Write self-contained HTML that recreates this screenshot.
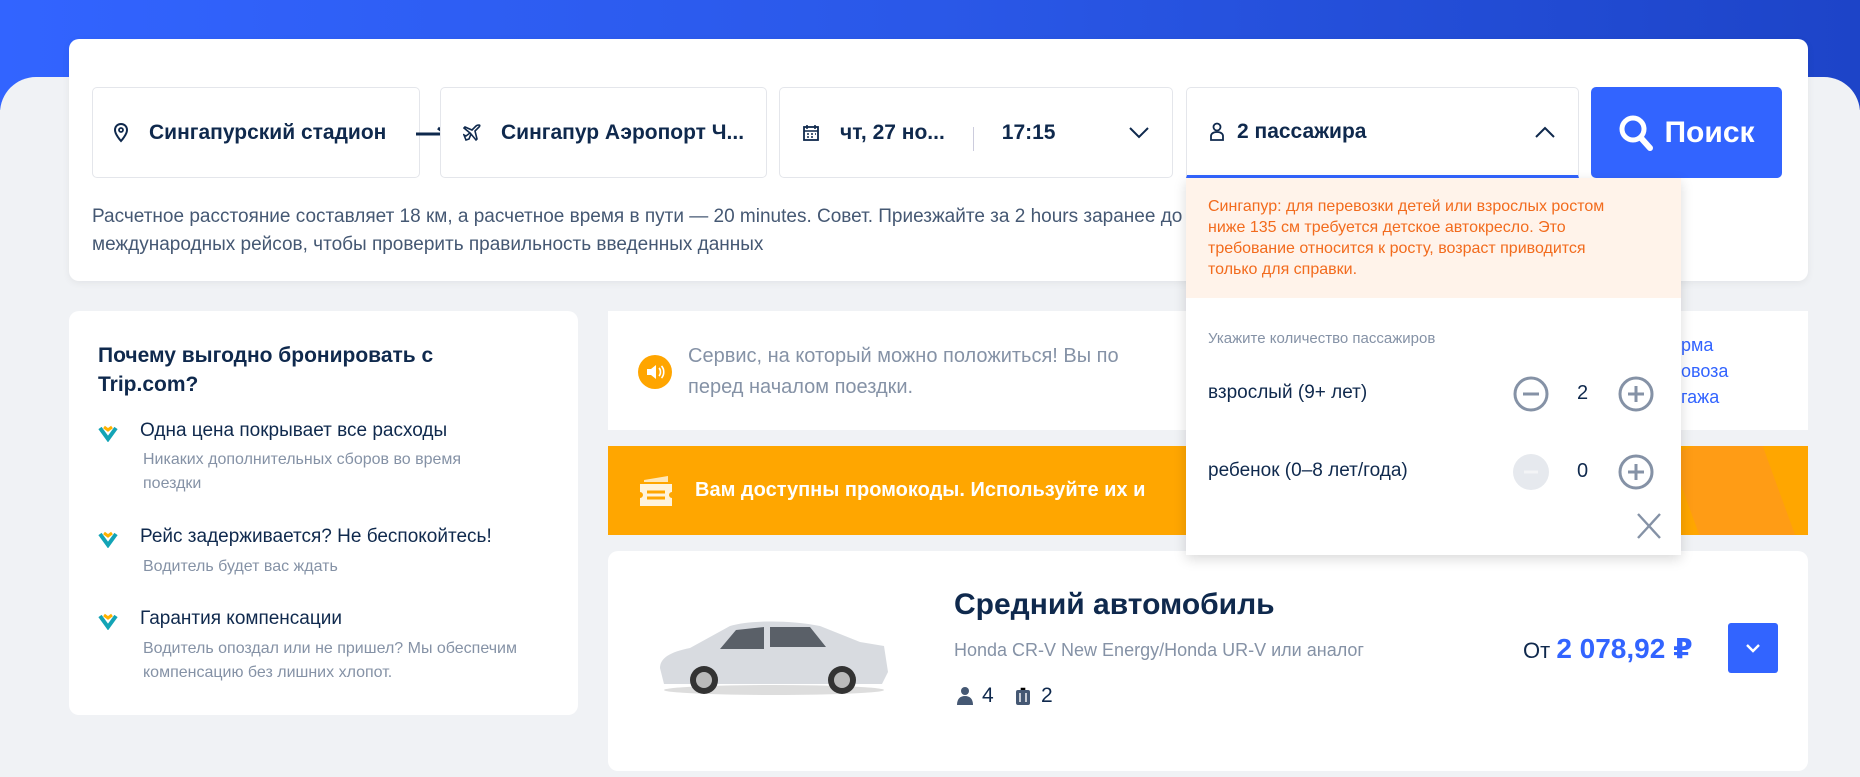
<!DOCTYPE html>
<html><head><meta charset="utf-8"><style>
*{box-sizing:border-box;margin:0;padding:0}
body{width:1860px;height:745px;overflow:hidden;background:#f0f2f5;font-family:"Liberation Sans","DejaVu Sans",sans-serif;position:relative;color:#0f294d}
.hdr{position:absolute;left:0;top:0;width:1860px;height:110px;background:linear-gradient(90deg,#3264ff,#2a58e8 50%,#1d44c8)}
.gb{position:absolute;left:0;top:77px;width:1860px;height:700px;background:#f0f2f5;border-radius:36px 36px 0 0}
.abs{position:absolute}
.card{position:absolute;background:#fff;border-radius:10px}
.f{position:absolute;top:87px;height:91px;border:1px solid #e4e6eb;border-radius:5px;background:#fff;display:flex;align-items:center;font-weight:bold;font-size:21px;color:#0f294d;white-space:nowrap}
.hint{position:absolute;left:92px;top:203px;font-size:19px;line-height:28px;color:#455873;width:1300px}
.dd{position:absolute;left:1186px;top:178px;width:495px;height:377px;background:#fff;box-shadow:0 4px 12px rgba(0,0,0,.15)}
.note{background:#fff3ea;color:#f26b1d;font-size:16px;line-height:21px;padding:18px 60px 0 22px;height:120px}
.row{position:absolute;left:22px;font-size:19px;color:#0f294d}
.circ{position:absolute;width:36px;height:36px}
.li{position:absolute;left:140px;font-size:19px;color:#0f294d}
.ls{position:absolute;left:143px;font-size:16px;color:#8592a6;line-height:24px;width:420px}
</style></head><body>
<div class="hdr"></div><div class="gb"></div>
<div class="card" style="left:69px;top:39px;width:1739px;height:242px;box-shadow:0 2px 8px rgba(0,0,0,.06)"></div>
<div class="hint">Расчетное расстояние составляет 18 км, а расчетное время в пути — 20 minutes. Совет. Приезжайте за 2 hours заранее до вылета международных рейсов, чтобы проверить правильность введенных данных</div>

<div class="f" style="left:92px;width:328px;padding-left:20px">
<svg width="16" height="20" viewBox="0 0 16 20" style="margin-right:20px"><path d="M8 1C4.5 1 2 3.6 2 7c0 4.5 6 11 6 11s6-6.5 6-11c0-3.4-2.5-6-6-6z" fill="none" stroke="#0f294d" stroke-width="2"/><circle cx="8" cy="7" r="2" fill="none" stroke="#0f294d" stroke-width="1.8"/></svg>Сингапурский стадион</div>
<svg class="abs" style="left:416px;top:126px" width="34" height="14" viewBox="0 0 34 14"><path d="M0 8h30M22 2l8 6" stroke="#0f294d" stroke-width="3" fill="none"/></svg>
<div class="f" style="left:440px;width:327px;padding-left:22px">
<svg width="20" height="20" viewBox="0 0 20 20" style="margin-right:18px"><path d="M3 17l3-1 2-5 5 6 1-1-2-8 4-4c1-1 1-2 0-2s-2 0-3 1l-4 4-7-3-1 1 6 5-4 3-2-1z" fill="none" stroke="#0f294d" stroke-width="1.6"/></svg>Сингапур Аэропорт Ч...</div>
<div class="f" style="left:779px;width:394px;padding-left:22px">
<svg width="18" height="18" viewBox="0 0 18 18" style="margin-right:20px"><rect x="2" y="3" width="14" height="13" fill="none" stroke="#0f294d" stroke-width="1.8"/><path d="M2 7h14M5 1v4M13 1v4M5 10h2M9 10h2M13 10h1M5 13h2M9 13h2" stroke="#0f294d" stroke-width="1.6"/></svg>чт, 27 но...
<span style="display:inline-block;width:1px;height:24px;background:#ccd;margin:0 28px 0 28px;position:relative;top:6px"></span>17:15
<svg width="22" height="14" viewBox="0 0 22 14" style="margin-left:auto;margin-right:22px"><path d="M2 2l9 9 9-9" stroke="#0f294d" stroke-width="2" fill="none"/></svg></div>
<div class="f" style="left:1186px;width:393px;padding-left:22px;border-bottom:3px solid #3264ff;border-radius:5px 5px 0 0">
<svg width="16" height="20" viewBox="0 0 16 20" style="margin-right:12px"><circle cx="8" cy="5" r="3.5" fill="none" stroke="#0f294d" stroke-width="1.8"/><path d="M2 18v-4c0-2 2-4 6-4s6 2 6 4v4z" fill="none" stroke="#0f294d" stroke-width="1.8"/></svg>2 пассажира
<svg width="22" height="14" viewBox="0 0 22 14" style="margin-left:auto;margin-right:22px"><path d="M2 12l9-9 9 9" stroke="#0f294d" stroke-width="2" fill="none"/></svg></div>
<div class="abs" style="left:1591px;top:87px;width:191px;height:91px;background:#3264ff;border-radius:5px;display:flex;align-items:center;justify-content:center;color:#fff;font-weight:bold;font-size:30px">
<svg width="36" height="38" viewBox="0 0 36 38" style="margin-right:10px"><circle cx="15" cy="15" r="11" fill="none" stroke="#fff" stroke-width="5"/><path d="M23 24l9 10" stroke="#fff" stroke-width="6" stroke-linecap="round"/></svg>Поиск</div>

<div class="card" style="left:69px;top:311px;width:509px;height:404px"></div>
<div class="abs" style="left:98px;top:341px;font-size:21px;font-weight:bold;line-height:29px;width:360px">Почему выгодно бронировать с Trip.com?</div>
<svg class="abs" style="left:98px;top:424px" width="20" height="18" viewBox="0 0 20 18"><path d="M2 4l8 11 8-11" stroke="#13a4b6" stroke-width="4" fill="none"/><path d="M6 3l4 3 4-3" stroke="#ffb200" stroke-width="3" fill="none"/></svg>
<svg class="abs" style="left:98px;top:530px" width="20" height="18" viewBox="0 0 20 18"><path d="M2 4l8 11 8-11" stroke="#13a4b6" stroke-width="4" fill="none"/><path d="M6 3l4 3 4-3" stroke="#ffb200" stroke-width="3" fill="none"/></svg>
<svg class="abs" style="left:98px;top:612px" width="20" height="18" viewBox="0 0 20 18"><path d="M2 4l8 11 8-11" stroke="#13a4b6" stroke-width="4" fill="none"/><path d="M6 3l4 3 4-3" stroke="#ffb200" stroke-width="3" fill="none"/></svg>
<div class="li" style="top:420px">Одна цена покрывает все расходы</div>
<div class="ls" style="top:448px">Никаких дополнительных сборов во время<br>поездки</div>
<div class="li" style="top:526px">Рейс задерживается? Не беспокойтесь!</div>
<div class="ls" style="top:555px">Водитель будет вас ждать</div>
<div class="li" style="top:608px">Гарантия компенсации</div>
<div class="ls" style="top:637px">Водитель опоздал или не пришел? Мы обеспечим<br>компенсацию без лишних хлопот.</div>

<div class="abs" style="left:608px;top:311px;width:1200px;height:119px;background:#fff"></div>
<svg class="abs" style="left:638px;top:355px" width="34" height="34" viewBox="0 0 34 34"><circle cx="17" cy="17" r="17" fill="#ffa500"/><path d="M9 14h4l5-4v14l-5-4H9z" fill="#fff"/><path d="M21 13c2 2 2 6 0 8M23.5 11c3 3 3 9 0 12" stroke="#fff" stroke-width="1.6" fill="none"/></svg>
<div class="abs" style="left:688px;top:341px;font-size:20px;line-height:31px;color:#8592a6;width:500px">Сервис, на который можно положиться! Вы по<br>перед началом поездки.</div>
<div class="abs" style="left:1681px;top:332px;font-size:18px;line-height:26px;color:#3264ff">рма<br>овоза<br>гажа</div>
<div class="abs" style="left:608px;top:446px;width:1200px;height:89px;background:#ffa600;overflow:hidden">
<div style="position:absolute;left:1080px;top:-10px;width:90px;height:120px;background:#ff9a1a;transform:rotate(-20deg);opacity:.8"></div></div>
<svg class="abs" style="left:638px;top:474px" width="36" height="34" viewBox="0 0 36 34"><path d="M6 6l24-4v6H6z" fill="#ffe7b8"/><path d="M2 10h32v8a3 3 0 000 6v8H2v-8a3 3 0 000-6z" fill="#fff3dc"/><path d="M9 18h18M9 24h18" stroke="#ffa600" stroke-width="3"/></svg>
<div class="abs" style="left:695px;top:479px;font-size:20px;font-weight:bold;color:#fff">Вам доступны промокоды. Используйте их и</div>

<div class="card" style="left:608px;top:551px;width:1200px;height:220px"></div>
<svg class="abs" style="left:656px;top:618px" width="236" height="80" viewBox="0 0 236 80"><ellipse cx="118" cy="72" rx="110" ry="5" fill="#ddd"/><path d="M4 50c0-10 10-16 30-20l40-22c20-6 60-6 90 0l40 16 24 4 4 26-6 12H8z" fill="#d8dbe0"/><path d="M80 12l28-3v22H64zM114 9h40l16 20h-56z" fill="#5a6068"/><circle cx="48" cy="62" r="14" fill="#333"/><circle cx="48" cy="62" r="8" fill="#bbb"/><circle cx="186" cy="62" r="14" fill="#333"/><circle cx="186" cy="62" r="8" fill="#bbb"/></svg>
<div class="abs" style="left:954px;top:588px;font-size:30px;font-weight:bold">Средний автомобиль</div>
<div class="abs" style="left:954px;top:640px;font-size:18px;color:#8592a6">Honda CR-V New Energy/Honda UR-V или аналог</div>
<svg class="abs" style="left:956px;top:686px" width="18" height="20" viewBox="0 0 18 20"><circle cx="9" cy="5" r="4" fill="#455873"/><path d="M1 19c0-6 3-9 8-9s8 3 8 9z" fill="#455873"/></svg>
<div class="abs" style="left:982px;top:684px;font-size:21px">4</div>
<svg class="abs" style="left:1015px;top:686px" width="16" height="20" viewBox="0 0 16 20"><rect x="1" y="4" width="14" height="15" rx="2" fill="#455873"/><path d="M5 4V1h6v3M5 7v9M11 7v9" stroke="#fff" stroke-width="1.4"/></svg>
<div class="abs" style="left:1041px;top:684px;font-size:21px">2</div>
<div class="abs" style="left:1523px;top:632px;font-size:28px;color:#0f294d;white-space:nowrap"><span style="font-size:22px">От </span><b style="color:#3264ff">2 078,92 ₽</b></div>
<div class="abs" style="left:1728px;top:623px;width:50px;height:50px;background:#3264ff;border-radius:3px"><svg width="50" height="50" viewBox="0 0 50 50"><path d="M19 22l6 6 6-6" stroke="#fff" stroke-width="2.4" fill="none"/></svg></div>

<div class="dd">
<div class="note">Сингапур: для перевозки детей или взрослых ростом ниже 135 см требуется детское автокресло. Это требование относится к росту, возраст приводится только для справки.</div>
<div class="abs" style="left:22px;top:152px;font-size:15px;color:#8592a6">Укажите количество пассажиров</div>
<div class="row" style="top:204px">взрослый (9+ лет)</div>
<div class="row" style="top:282px">ребенок (0–8 лет/года)</div>
<svg class="circ" style="left:327px;top:198px" viewBox="0 0 36 36"><circle cx="18" cy="18" r="16" fill="none" stroke="#8592a6" stroke-width="3"/><path d="M10 18h16" stroke="#8592a6" stroke-width="3"/></svg>
<div class="abs" style="left:391px;top:204px;font-size:20px">2</div>
<svg class="circ" style="left:432px;top:198px" viewBox="0 0 36 36"><circle cx="18" cy="18" r="16" fill="none" stroke="#8592a6" stroke-width="3"/><path d="M10 18h16M18 10v16" stroke="#8592a6" stroke-width="3"/></svg>
<svg class="circ" style="left:327px;top:276px" viewBox="0 0 36 36"><circle cx="18" cy="18" r="18" fill="#e6e9ee"/><path d="M11 18h14" stroke="#f3f4f6" stroke-width="3"/></svg>
<div class="abs" style="left:391px;top:282px;font-size:20px">0</div>
<svg class="circ" style="left:432px;top:276px" viewBox="0 0 36 36"><circle cx="18" cy="18" r="16" fill="none" stroke="#8592a6" stroke-width="3"/><path d="M10 18h16M18 10v16" stroke="#8592a6" stroke-width="3"/></svg>
<svg class="abs" style="left:450px;top:334px" width="26" height="28" viewBox="0 0 26 28"><path d="M2 2l22 24M24 2L2 26" stroke="#8592a6" stroke-width="2.4"/></svg>
</div>
</body></html>
